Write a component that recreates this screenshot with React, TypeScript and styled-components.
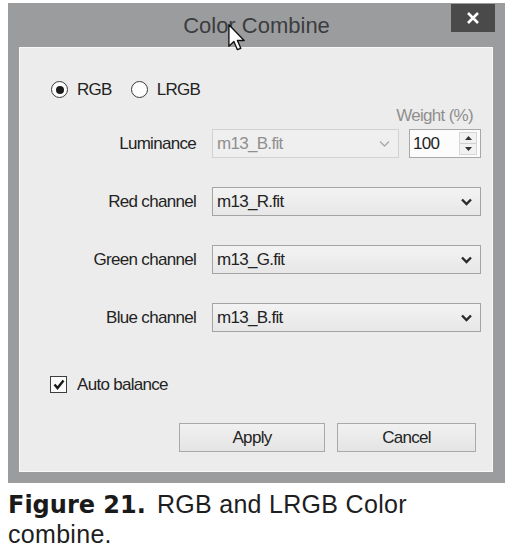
import React from "react";
import styled, { createGlobalStyle } from "styled-components";

const Global = createGlobalStyle`
  html, body { margin: 0; padding: 0; background: #ffffff; }
  body { font-family: "Liberation Sans", Arial, sans-serif; }
`;

const Page = styled.div`
  display: flex;
  flex-direction: column;
  width: 511px;
`;

const Window = styled.div`
  position: relative;
  margin: 3px 0 0 8px;
  width: 497px;
  height: 480px;
  background: #9b9c9e;
  display: flex;
  flex-direction: column;
  box-sizing: border-box;
`;

const TitleBar = styled.div`
  height: 44px;
  display: flex;
  align-items: center;
  justify-content: center;
  font-size: 22px;
  color: #3b3c3e;
  padding-top: 1px;
  box-sizing: border-box;
`;

const CloseButton = styled.div`
  position: absolute;
  top: 1px;
  right: 10px;
  width: 44px;
  height: 28px;
  background: #4a4a4b;
  display: flex;
  align-items: center;
  justify-content: center;
`;

const Cursor = styled.svg`
  position: absolute;
  left: 220px;
  top: 21px;
`;

const Inner = styled.div`
  flex: 1;
  margin: 0 12px 11px 11px;
  background: #ececec;
  border: 1px solid #f8f8f8;
  display: flex;
  flex-direction: column;
  box-sizing: border-box;
`;

const Text = styled.span<{ $muted?: boolean }>`
  font-size: 17px;
  letter-spacing: -0.7px;
  color: ${(p) => (p.$muted ? "#8f8f8f" : "#232323")};
  white-space: nowrap;
`;

const RadioGroup = styled.div`
  margin: 33px 0 0 31px;
  height: 17px;
  display: flex;
  align-items: center;
  gap: 19px;
`;

const RadioItem = styled.label`
  display: flex;
  align-items: center;
  gap: 9px;
`;

const RadioCircle = styled.span<{ $checked?: boolean }>`
  width: 17px;
  height: 17px;
  border-radius: 50%;
  border: 1.5px solid #3a3a3a;
  background: #fdfdfd;
  box-sizing: border-box;
  display: flex;
  align-items: center;
  justify-content: center;
  &::after {
    content: "";
    width: 8px;
    height: 8px;
    border-radius: 50%;
    background: ${(p) => (p.$checked ? "#1b1b1b" : "transparent")};
  }
`;

const WeightRow = styled.div`
  margin-top: 9px;
  height: 17px;
  display: flex;
  align-items: center;
  justify-content: flex-end;
  padding-right: 19px;
`;

const FormGrid = styled.div`
  margin-top: 5px;
  display: grid;
  grid-template-columns: 176px 269px;
  column-gap: 16px;
  row-gap: 29px;
  grid-auto-rows: 29px;
`;

const Label = styled(Text)`
  justify-self: end;
  align-self: center;
`;

const FieldPair = styled.div`
  display: flex;
  gap: 10px;
`;

const Combo = styled.div<{ $disabled?: boolean; $width?: number }>`
  width: ${(p) => (p.$width ? `${p.$width}px` : "100%")};
  height: 29px;
  box-sizing: border-box;
  border: 1px solid ${(p) => (p.$disabled ? "#d2d2d2" : "#a4a4a4")};
  background: ${(p) =>
    p.$disabled ? "#efefef" : "linear-gradient(#f3f3f3, #e7e7e7)"};
  display: flex;
  align-items: center;
  justify-content: space-between;
  padding: 0 8px 0 4px;
`;

const Spin = styled.div`
  width: 72px;
  height: 29px;
  box-sizing: border-box;
  border: 1px solid #a8a8a8;
  background: #fcfcfc;
  display: flex;
  align-items: center;
  justify-content: space-between;
  padding: 0 3px 0 3px;
`;

const SpinButtons = styled.div`
  width: 18px;
  height: 23px;
  display: flex;
  flex-direction: column;
  border: 1px solid #d6d6d6;
  box-sizing: border-box;
  background: #f1f1f1;
`;

const SpinHalf = styled.div<{ $top?: boolean }>`
  flex: 1;
  display: flex;
  align-items: center;
  justify-content: center;
  border-bottom: ${(p) => (p.$top ? "1px solid #cfcfcf" : "none")};
`;

const CheckRow = styled.label`
  margin: 44px 0 0 30px;
  height: 17px;
  display: flex;
  align-items: center;
  gap: 10px;
`;

const CheckBox = styled.span`
  width: 17px;
  height: 17px;
  box-sizing: border-box;
  border: 1.5px solid #3d3d3d;
  background: #fbfbfb;
  display: flex;
  align-items: center;
  justify-content: center;
`;

const ButtonRow = styled.div`
  margin-top: 30px;
  display: flex;
  justify-content: flex-end;
  gap: 12px;
  padding-right: 16px;
`;

const Button = styled.div<{ $width: number }>`
  width: ${(p) => p.$width}px;
  height: 29px;
  box-sizing: border-box;
  border: 1px solid #a9a9a9;
  background: linear-gradient(#f1f1f1, #e4e4e4);
  display: flex;
  align-items: center;
  justify-content: center;
`;

const Caption = styled.div`
  margin: 6px 0 0 8px;
  display: flex;
  flex-direction: column;
  color: #1e1e1e;
`;

const CaptionLine = styled.div`
  height: 30px;
  display: flex;
  align-items: baseline;
  font-size: 25px;
  line-height: 30px;
  letter-spacing: 0.3px;
  white-space: nowrap;
`;

const FigureNo = styled.span`
  font-family: "DejaVu Sans", "Liberation Sans", sans-serif;
  font-weight: bold;
  font-size: 24px;
  letter-spacing: 0;
  margin-right: 11px;
  color: #1a1a1a;
`;

const Chevron = ({ muted }: { muted?: boolean }) => (
  <svg width="11" height="8" viewBox="0 0 11 8">
    <polyline
      points="1,1.5 5.5,6 10,1.5"
      fill="none"
      stroke={muted ? "#a9a9a9" : "#2a2a2a"}
      strokeWidth={muted ? 1.3 : 2.4}
    />
  </svg>
);

const channels = [
  { label: "Red channel", file: "m13_R.fit" },
  { label: "Green channel", file: "m13_G.fit" },
  { label: "Blue channel", file: "m13_B.fit" },
];

export default function App() {
  return (
    <Page>
      <Global />
      <Window>
        <TitleBar>Color Combine</TitleBar>
        <CloseButton>
          <svg width="14" height="14" viewBox="0 0 14 14">
            <path d="M2 2 L12 12 M12 2 L2 12" stroke="#ffffff" strokeWidth="2.6" />
          </svg>
        </CloseButton>
        <Inner>
          <RadioGroup>
            <RadioItem>
              <RadioCircle $checked />
              <Text>RGB</Text>
            </RadioItem>
            <RadioItem>
              <RadioCircle />
              <Text>LRGB</Text>
            </RadioItem>
          </RadioGroup>
          <WeightRow>
            <Text $muted>Weight (%)</Text>
          </WeightRow>
          <FormGrid>
            <Label>Luminance</Label>
            <FieldPair>
              <Combo $disabled $width={187}>
                <Text $muted>m13_B.fit</Text>
                <Chevron muted />
              </Combo>
              <Spin>
                <Text>100</Text>
                <SpinButtons>
                  <SpinHalf $top>
                    <svg width="7" height="4" viewBox="0 0 7 4">
                      <polygon points="0,4 3.5,0 7,4" fill="#333" />
                    </svg>
                  </SpinHalf>
                  <SpinHalf>
                    <svg width="7" height="4" viewBox="0 0 7 4">
                      <polygon points="0,0 3.5,4 7,0" fill="#333" />
                    </svg>
                  </SpinHalf>
                </SpinButtons>
              </Spin>
            </FieldPair>
            {channels.map((c) => (
              <React.Fragment key={c.label}>
                <Label>{c.label}</Label>
                <Combo>
                  <Text>{c.file}</Text>
                  <Chevron />
                </Combo>
              </React.Fragment>
            ))}
          </FormGrid>
          <CheckRow>
            <CheckBox>
              <svg width="12" height="11" viewBox="0 0 12 11">
                <polyline points="1.5,5.5 4.5,9 10.5,1.5" fill="none" stroke="#1a1a1a" strokeWidth="2.4" />
              </svg>
            </CheckBox>
            <Text>Auto balance</Text>
          </CheckRow>
          <ButtonRow>
            <Button $width={146}>
              <Text>Apply</Text>
            </Button>
            <Button $width={139}>
              <Text>Cancel</Text>
            </Button>
          </ButtonRow>
        </Inner>
        <Cursor width="18" height="27" viewBox="0 0 13 20">
          <path
            d="M0.5 0.5 L0.5 16.5 L4.2 13 L6.8 19 L9.3 18 L6.8 12.2 L11.8 12.2 Z"
            fill="#ffffff"
            stroke="#111"
            strokeWidth="1"
            strokeLinejoin="round"
          />
        </Cursor>
      </Window>
      <Caption>
        <CaptionLine>
          <FigureNo>Figure 21.</FigureNo>
          <span>RGB and LRGB Color</span>
        </CaptionLine>
        <CaptionLine>
          <span>combine.</span>
        </CaptionLine>
      </Caption>
    </Page>
  );
}
